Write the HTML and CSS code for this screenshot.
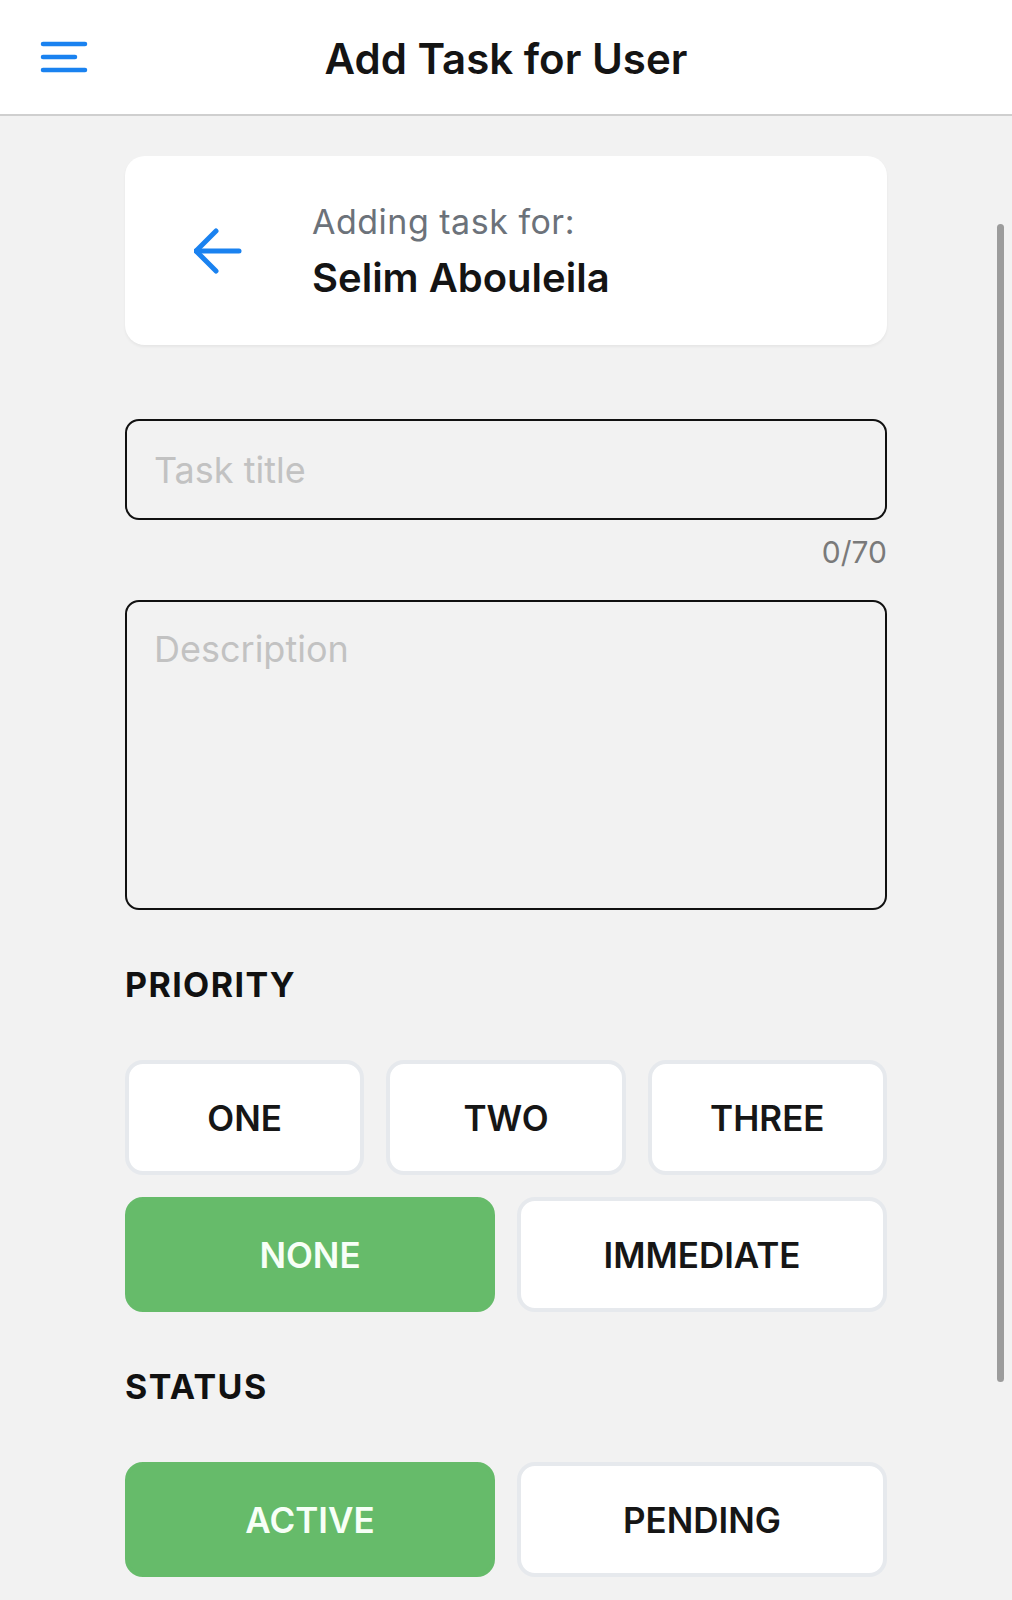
FILE: index.html
```html
<!DOCTYPE html>
<html lang="en">
<head>
    <meta charset="UTF-8">
    <meta name="viewport" content="width=device-width, initial-scale=1.0">
    <title>Add Task for User</title>
    <link rel="stylesheet" href="styles.css">
</head>
<body>

<div class="header">
    <button class="menu-btn" aria-label="Menu">
        <svg width="48" height="34" viewBox="0 0 48 34">
            <line x1="3" y1="3" x2="45" y2="3" />
            <line x1="3" y1="16" x2="35" y2="16" />
            <line x1="3" y1="29" x2="45" y2="29" />
        </svg>
    </button>
    <h1>Add Task for User</h1>
    <div></div>
</div>

<div class="container">
    <div class="user-card">
        <button class="back-btn" aria-label="Back">
            <svg width="48" height="48" viewBox="0 0 48 48">
                <polyline points="22,4 2,24 22,44" />
                <line x1="2" y1="24" x2="45" y2="24" />
            </svg>
        </button>
        <div class="user-info">
            <p class="user-label">Adding task for:</p>
            <p class="user-name">Selim Abouleila</p>
        </div>
    </div>

    <div class="form-container">
        <input type="text" id="task-title" class="field" placeholder="Task title" maxlength="70">
        <div class="counter" id="title-count">0/70</div>
        <textarea id="task-desc" class="field field-area" placeholder="Description"></textarea>
    </div>

    <h2 class="section-title">PRIORITY</h2>
    <div class="choice-grid three">
        <button class="choice">ONE</button>
        <button class="choice">TWO</button>
        <button class="choice">THREE</button>
    </div>
    <div class="choice-grid two">
        <button class="choice selected">NONE</button>
        <button class="choice">IMMEDIATE</button>
    </div>

    <h2 class="section-title">STATUS</h2>
    <div class="choice-grid two">
        <button class="choice selected">ACTIVE</button>
        <button class="choice">PENDING</button>
    </div>
</div>

<div class="scrollbar"></div>

</body>
</html>
```

FILE: styles.css
```css
body {
    font-family: 'Inter', 'Noto Sans', sans-serif;
    background-color: #f2f2f2;
    color: #1c1c1e;
    margin: 0;
    padding: 0;
}

button {
    font-family: inherit;
    cursor: pointer;
    background: none;
    border: none;
    padding: 0;
}

/* Top bar */
.header {
    height: 114px;
    background-color: white;
    border-bottom: 2px solid #cfcfcf;
    display: grid;
    grid-template-columns: 1fr auto 1fr;
    align-items: center;
    padding: 0 40px;
}

.menu-btn {
    width: 48px;
    height: 34px;
    margin-top: 2px;
}

.menu-btn svg line {
    stroke: #1a82f0;
    stroke-width: 4.5;
    stroke-linecap: round;
}

.header h1 {
    margin: 0;
    font-size: 42px;
    font-weight: 600;
    color: #141414;
    padding-top: 2px;
}

.container {
    width: 762px;
    margin: 40px auto 0;
}

/* User card */
.user-card {
    height: 189px;
    background-color: white;
    border-radius: 20px;
    box-shadow: 0 2px 3px rgba(0, 0, 0, 0.05);
    display: flex;
    align-items: center;
    padding-left: 69px;
    box-sizing: border-box;
}

.back-btn {
    width: 48px;
    height: 48px;
    margin-right: 70px;
}

.back-btn svg polyline,
.back-btn svg line {
    fill: none;
    stroke: #1a82f0;
    stroke-width: 5;
    stroke-linecap: round;
    stroke-linejoin: round;
}

.user-info p {
    margin: 0;
}

.user-label {
    font-size: 34px;
    line-height: 44px;
    letter-spacing: 0.5px;
    color: #6c727a;
}

.user-name {
    font-size: 40px;
    line-height: 48px;
    font-weight: 600;
    color: #141414;
    margin-top: 10px !important;
}

/* Inputs */
.form-container {
    margin-top: 74px;
}

.field {
    display: block;
    width: 100%;
    box-sizing: border-box;
    border: 2px solid #111;
    border-radius: 14px;
    background-color: transparent;
    font-family: inherit;
    font-size: 36px;
    color: #1c1c1e;
    padding: 0 27px;
    outline: none;
}

input.field {
    height: 101px;
}

.field::placeholder {
    color: #c2c2c2;
}

.counter {
    text-align: right;
    font-size: 30px;
    line-height: 36px;
    color: #7a7a7a;
    margin-top: 14px;
}

.field-area {
    height: 310px;
    margin-top: 30px;
    padding-top: 26px;
    line-height: 1.2;
    resize: none;
}

/* Choice buttons */
.section-title {
    font-size: 34px;
    line-height: 40px;
    font-weight: 700;
    letter-spacing: 1.4px;
    color: #111;
    margin: 55px 0;
}

.choice-grid {
    display: grid;
    gap: 22px;
    margin-bottom: 22px;
}

.choice-grid.three {
    grid-template-columns: repeat(3, 1fr);
}

.choice-grid.two {
    grid-template-columns: repeat(2, 1fr);
}

.choice {
    height: 115px;
    background-color: white;
    border: 4px solid #e6e9ed;
    border-radius: 18px;
    font-size: 35px;
    font-weight: 600;
    color: #161616;
}

.choice.selected {
    background-color: #66bb6a;
    border-color: #66bb6a;
    color: #f7fff7;
}

/* Overlay scrollbar */
.scrollbar {
    position: absolute;
    top: 224px;
    left: 997px;
    width: 7px;
    height: 1158px;
    border-radius: 4px;
    background-color: #9c9c9c;
}
```
